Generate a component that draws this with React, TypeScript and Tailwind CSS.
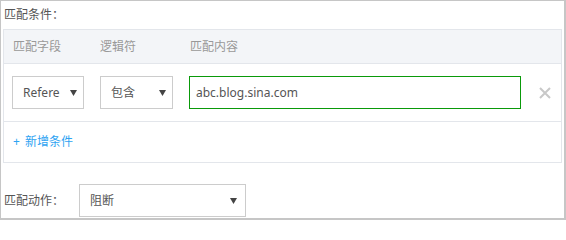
import React from "react";

const font = { fontFamily: '"Noto Sans", "Noto Sans CJK SC", sans-serif' };

function Caret() {
  return (
    <svg width="7" height="6" viewBox="0 0 7 6" className="shrink-0">
      <path d="M0 0 H7 L3.5 6 Z" fill="#444" />
    </svg>
  );
}

function SelectBox({ value, className }: { value: string; className: string }) {
  return (
    <div
      className={`flex items-center h-[33px] border border-[#cccccc] bg-white pl-[10px] pr-[6px] ${className}`}
    >
      <span className="flex-1 overflow-hidden whitespace-nowrap text-[12px] text-[#555] mr-[10px]">{value}</span>
      <Caret />
    </div>
  );
}

export default function App() {
  return (
    <div
      style={font}
      className="w-[566px] h-[220px] box-border border-l border-t border-r-2 border-b-2 border-[#c6c6c6] bg-white px-[2px]"
    >
      <div className="h-[28px] flex items-center pl-[1px] text-[12px] text-[#555]">匹配条件：</div>

      <div className="border border-[#e3e6eb]">
        <div className="h-[34px] flex items-center bg-[#f3f5f8] border-b border-[#e3e6eb] text-[12px] text-[#999] pl-[9px]">
          <span className="w-[87px]">匹配字段</span>
          <span className="w-[90px]">逻辑符</span>
          <span>匹配内容</span>
        </div>

        <div className="flex items-center px-[8px] pt-[12px] pb-[12px] border-b border-[#e3e6eb]">
          <SelectBox value="Referer" className="w-[72px]" />
          <SelectBox value="包含" className="w-[73px] ml-[16px]" />
          <div className="w-[332px] h-[33px] ml-[16px] flex items-center border border-[#0a9a0a] px-[6px] text-[12px] text-[#555]">
            abc.blog.sina.com
          </div>
          <button className="ml-[18px] text-[#c8c8c8]">
            <svg width="12" height="12" viewBox="0 0 12 12">
              <path d="M1 1 L11 11 M11 1 L1 11" stroke="currentColor" strokeWidth="2" />
            </svg>
          </button>
        </div>

        <div className="h-[40px] flex items-center pl-[9px] text-[12px] text-[#2ea3f2]">
          <span className="mr-[5px]">+</span>
          <span>新增条件</span>
        </div>
      </div>

      <div className="flex items-center mt-[21px] pl-[1px]">
        <span className="w-[75px] text-[12px] text-[#555]">匹配动作：</span>
        <SelectBox value="阻断" className="w-[167px] h-[32px] pr-[8px]" />
      </div>
    </div>
  );
}
